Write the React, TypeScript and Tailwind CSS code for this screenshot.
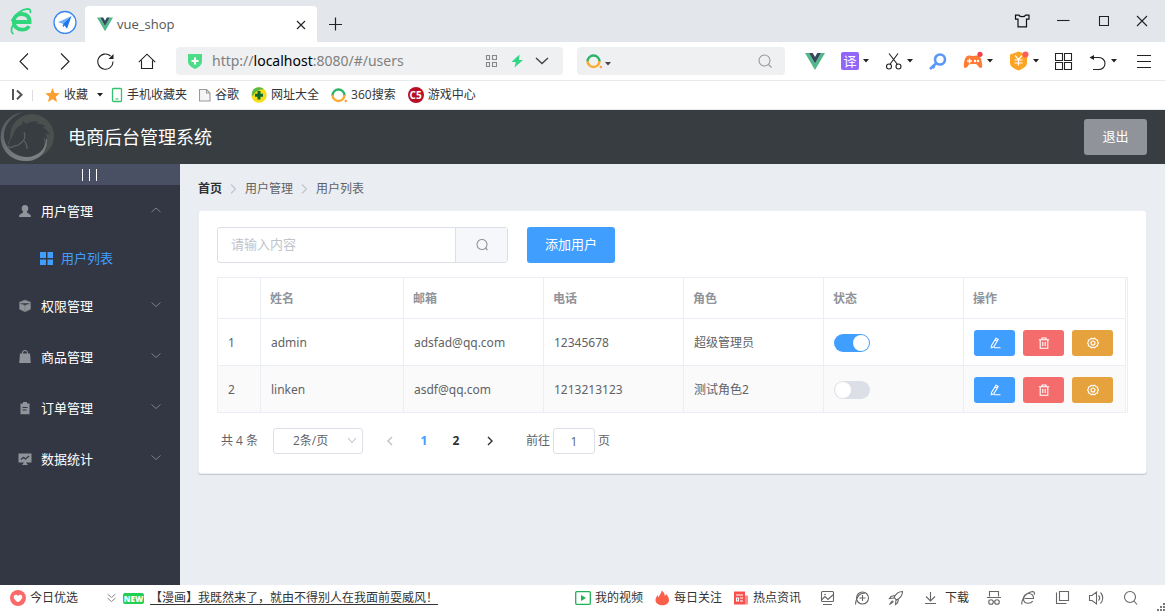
import { useState, type ReactNode } from "react";
import { clsx } from "clsx";

type User = {
  id: number;
  name: string;
  email: string;
  phone: string;
  role: string;
  active: boolean;
};

const USERS: User[] = [
  { id: 1, name: "admin", email: "adsfad@qq.com", phone: "12345678", role: "超级管理员", active: true },
  { id: 2, name: "linken", email: "asdf@qq.com", phone: "1213213123", role: "测试角色2", active: false },
];

const HEADINGS = ["姓名", "邮箱", "电话", "角色", "状态", "操作"];

function Svg({ w = 18, h = 18, className, children }: { w?: number; h?: number; className?: string; children: ReactNode }) {
  return (
    <svg
      width={w}
      height={h}
      viewBox={`0 0 ${w} ${h}`}
      fill="none"
      stroke="currentColor"
      strokeWidth="1.1"
      className={clsx("shrink-0", className)}
      aria-hidden="true"
    >
      {children}
    </svg>
  );
}

function Caret() {
  return (
    <Svg w={6} h={4}>
      <path d="M0 0h6L3 3.6z" fill="#222" stroke="none" />
    </Svg>
  );
}

function VueLogo({ size = 20 }: { size?: number }) {
  return (
    <svg width={size} height={size} viewBox="0 0 20 20" className="shrink-0" aria-hidden="true">
      <path d="M0 2h4l6 10.4L16 2h4L10 19z" fill="#4fb98a" />
      <path d="M4 2h3.7L10 6l2.3-4H16l-6 10.4z" fill="#35495e" />
    </svg>
  );
}

function SearchRing() {
  return (
    <Svg w={16} h={16}>
      <path d="M1.5 8.5a6 6 0 0 1 12 0" stroke="#2bb368" strokeWidth="2.4" />
      <path d="M1.5 8a6 6 0 0 0 12 0" stroke="#fbab2f" strokeWidth="2.4" />
      <circle cx="14.8" cy="14" r="1.2" fill="#fb9a3c" stroke="none" />
    </Svg>
  );
}

function TabStrip() {
  return (
    <div className="flex h-[42px] shrink-0 items-center bg-[#e3e6eb] text-[#222]">
      <Svg w={24} h={28} className="ml-[10px]">
        <path d="M4 15h15.6c.2-5-3-8-7.600-8-4.800 0-8.300 3.200-8.300 7.800s3.500 7.900 8.300 7.900c3.200 0 5.600-1.200 7-3.600" stroke="#2fd67c" strokeWidth="3.800" />
        <path d="M1.500 14C5 7 12 2 17.500 1.800c2.300 0 3.500 1.400 2.800 4.200M3 18C.8 22 .8 26 3.500 27" stroke="#2fd67c" strokeWidth="1.700" />
      </Svg>
      <button type="button" aria-label="导航" className="ml-[19px]">
        <Svg w={24} h={26}>
          <circle cx="12" cy="14.500" r="11" fill="#fff" stroke="#3a86f0" strokeWidth="1.300" />
          <path d="M18.500 8 5 14.300l5 1.400z" fill="#6bb0ff" stroke="none" />
          <path d="M18.500 8 10 15.700l4 5z" fill="#1d76ee" stroke="none" />
          <path d="m10 15.700-.3 3.800 1.900-2z" fill="#1d76ee" stroke="none" />
        </Svg>
      </button>
      <div className="ml-2 flex h-9 w-[232px] items-center self-end rounded-t-sm bg-white pl-3 pr-[10px]">
        <VueLogo size={16} />
        <span className="ml-1 flex-1 text-[13px] leading-5 text-[#555]">vue_shop</span>
        <button type="button" aria-label="关闭标签" className="pt-[2px]">
          <Svg w={12} h={12}>
            <path d="m2 2 8 8m0-8-8 8" />
          </Svg>
        </button>
      </div>
      <button type="button" aria-label="新标签" className="ml-3 pt-[6px]">
        <Svg w={14} h={14}>
          <path d="M6.500.5v13M0 7.500h13" strokeWidth="1.200" />
        </Svg>
      </button>
      <div className="ml-auto flex items-center gap-[27px] pr-[17px]">
        <button type="button" aria-label="皮肤">
          <Svg w={16} h={14}>
            <path d="M5 1.200H1.500v4H4v7.600h8.500V5.200H15v-4h-3.500c-.8 2-5.700 2-6.500 0z" stroke="#111" strokeWidth="1.200" />
          </Svg>
        </button>
        <button type="button" aria-label="最小化">
          <Svg w={13} h={14}>
            <path d="M0 6.500h12.500" />
          </Svg>
        </button>
        <button type="button" aria-label="最大化">
          <Svg w={12} h={14}>
            <path d="M2.500 2.500h9v9h-9z" />
          </Svg>
        </button>
        <button type="button" aria-label="关闭">
          <Svg w={12} h={14}>
            <path d="m1 2 10 10M11 2 1 12" />
          </Svg>
        </button>
      </div>
    </div>
  );
}

function Tool({ label, caret, children }: { label: string; caret?: boolean; children: ReactNode }) {
  return (
    <button type="button" aria-label={label} className="flex items-center gap-1">
      {children}
      {caret && <Caret />}
    </button>
  );
}

function NavButton({ label, children }: { label: string; children: ReactNode }) {
  return (
    <button type="button" aria-label={label} className="flex w-[41px] justify-center">
      {children}
    </button>
  );
}

function AddressBar() {
  return (
    <div className="flex h-[39px] shrink-0 items-center border-b border-[#e8eaec] bg-white pl-[3px] pr-3 text-[#222]">
      <NavButton label="后退">
        <Svg>
          <path d="M13 1.500 5 9.500l8 8" />
        </Svg>
      </NavButton>
      <NavButton label="前进">
        <Svg>
          <path d="m5 1.500 8 8-8 8" />
        </Svg>
      </NavButton>
      <NavButton label="刷新">
        <Svg>
          <path d="M16 9.500A7.600 7.600 0 1 1 13.500 4" />
          <path d="M16.500 2v5h-5z" fill="#222" stroke="none" />
        </Svg>
      </NavButton>
      <NavButton label="主页">
        <Svg>
          <path d="m.8 10.200 8.200-8 8.200 8M3.500 8.500v8h11v-8" />
        </Svg>
      </NavButton>
      <div className="ml-[9px] flex h-7 flex-1 items-center rounded bg-[#eff0f2] pl-3 pr-[14px]">
        <Svg w={14} h={16}>
          <path d="M0 1h14v7c0 4-3 6-7 8-4-2-7-4-7-8z" fill="#4cdb86" stroke="none" />
          <path d="M7 4.500v7M3.500 8h7" stroke="#fff" strokeWidth="2" />
        </Svg>
        <a href="http://localhost:8080/#/users" className="ml-[10px] flex-1 whitespace-nowrap font-['Noto_Sans','Noto_Sans_CJK_SC',sans-serif] text-[14px] leading-5 text-[#808080]">
          http://<span className="text-black">localhost</span>:8080/#/users
        </a>
        <Svg w={12} h={12} className="text-[#888]">
          <path d="M1.500.5h3v4h-3zM7.500.5h4v4h-4zM1.500 7.500h3v4h-3zM7.500 7.500h4v4h-4z" />
        </Svg>
        <Svg w={12} h={14} className="ml-[14px]">
          <path d="M8.500.5.5 8h4.300L3.500 13.500 12 6H8z" fill="#32d583" stroke="none" />
        </Svg>
        <Svg w={14} h={8} className="ml-3 text-[#444]">
          <path d="m1 1 6 5.500L13 1" strokeWidth="1.400" />
        </Svg>
      </div>
      <div className="ml-[14px] mr-5 flex h-7 w-[208px] items-center rounded bg-[#eff0f2] px-[9px] pr-[13px]">
        <SearchRing />
        <Svg w={6} h={10} className="ml-[3px]">
          <path d="M0 6h6L3 9.500z" fill="#444" stroke="none" />
        </Svg>
        <input aria-label="搜索" className="min-w-0 flex-1 bg-transparent text-[13px] outline-none" />
        <Svg w={14} h={14} className="text-[#999]">
          <circle cx="6.500" cy="6.500" r="5.500" />
          <path d="m10.500 10.500 3 3" />
        </Svg>
      </div>
      <div className="flex items-center gap-4">
        <Tool label="Vue">
          <VueLogo />
        </Tool>
        <Tool label="翻译" caret>
          <span className="flex size-[18px] items-center justify-center rounded-xs bg-[#9266f9] text-[13px] leading-none text-white">译</span>
        </Tool>
        <Tool label="截图" caret>
          <Svg>
            <path d="M4 1.500 12.500 12.500M13 1.500 4.800 12.500" />
            <circle cx="4" cy="14.500" r="2.500" />
            <circle cx="13.500" cy="14.500" r="2.500" />
          </Svg>
        </Tool>
        <Tool label="密码">
          <Svg>
            <circle cx="11" cy="7.500" r="5" stroke="#5a97f8" strokeWidth="2.600" />
            <path d="m7.500 11-6.500 6M4 14.500l1.500 1.500" stroke="#5a97f8" strokeWidth="2.600" />
          </Svg>
        </Tool>
        <Tool label="游戏" caret>
          <Svg w={20} h={20}>
            <path d="M6 4.500c2 .6 6 .6 8 0 4 0 5 6 5.200 10.500.1 2.800-2.700 2.300-4 .2-1.200-2-2-2.200-5.200-2.200s-4 .2-5.200 2.200c-1.300 2.100-4.100 2.600-4-.2C1 10.500 2 4.500 6 4.500z" fill="#ff7b35" stroke="none" />
            <path d="M6.500 7.500v5M4 10h5" stroke="#fff" strokeWidth="1.300" />
            <circle cx="12" cy="10" r="1.200" fill="#fff" stroke="none" />
            <circle cx="15" cy="10" r="1.200" fill="#fff" stroke="none" />
            <circle cx="17" cy="3.300" r="2.600" fill="#f4404c" stroke="none" />
          </Svg>
        </Tool>
        <Tool label="钱包" caret>
          <Svg w={20} h={20}>
            <path d="M9.500.5 18 3.500V12c0 3.800-5 6-8.500 7.500C6 18 1 15.800 1 12V3.500z" fill="#fca524" stroke="none" />
            <path d="m6 4.500 3.500 4 3.500-4M9.500 8.500v6M5.500 9h8M5.500 12h8" stroke="#fff" strokeWidth="1.200" />
            <circle cx="16.500" cy="3.500" r="3" fill="#ff5b5b" stroke="none" />
          </Svg>
        </Tool>
        <Tool label="应用">
          <Svg>
            <path d="M.5 1.500h7v7h-7zM9.500 1.500h7v7h-7zM.5 10.500h7v7h-7zM9.500 10.500h7v7h-7z" />
          </Svg>
        </Tool>
        <Tool label="恢复" caret>
          <Svg>
            <path d="M3 5.500h7a6 6 0 0 1 0 12H4" />
            <path d="M.5 5.500 5 3v5z" fill="#222" stroke="none" />
          </Svg>
        </Tool>
        <Tool label="菜单">
          <Svg w={20} h={18}>
            <path d="M4 3.500h14M4 9.500h14M4 15.500h14" />
          </Svg>
        </Tool>
      </div>
    </div>
  );
}

function Bookmark({ icon, children }: { icon: ReactNode; children: ReactNode }) {
  return (
    <a href="#" className="flex items-center gap-1 whitespace-nowrap">
      {icon}
      {children}
    </a>
  );
}

function BookmarkBar() {
  return (
    <div className="flex h-[29px] shrink-0 items-center border-b border-[#e8eaec] bg-white pl-3 text-[12px] leading-4 text-[#333]">
      <button type="button" aria-label="展开">
        <Svg w={11} h={12}>
          <path d="M1 0v11" stroke="#555" strokeWidth="2" />
          <path d="m5 1.500 4.500 4.300L5 10.200" stroke="#555" strokeWidth="2" />
        </Svg>
      </button>
      <span className="ml-[9px] mr-3 h-[11px] w-px bg-[#ddd]" />
      <button type="button" className="mr-2 flex items-center gap-[3px]">
        <Svg w={16} h={16}>
          <path d="m7.500 1 2 4.900 5.300.4-4 3.500 1.200 5.200-4.500-2.800L3 15l1.200-5.200-4-3.500 5.300-.4z" fill="#fba02f" stroke="none" />
        </Svg>
        收藏
        <span className="ml-[6px]">
          <Caret />
        </span>
      </button>
      <div className="flex items-center gap-3">
        <Bookmark
          icon={
            <Svg w={12} h={16}>
              <rect x="1.500" y="1.500" width="9" height="13" rx="1" stroke="#34c26e" strokeWidth="1.300" />
              <path d="M4.500 12h3" stroke="#34c26e" />
            </Svg>
          }
        >
          手机收藏夹
        </Bookmark>
        <Bookmark
          icon={
            <Svg w={12} h={14}>
              <path d="M.5 1.500h7l3.500 3.500v8H.5z" stroke="#999" fill="#f5f5f5" />
              <path d="M7.500 1.500V5H11" stroke="#999" />
            </Svg>
          }
        >
          谷歌
        </Bookmark>
        <Bookmark
          icon={
            <Svg w={16} h={16}>
              <circle cx="8" cy="8" r="7.700" fill="#f8dc1c" stroke="none" />
              <path d="M2.500 2.500A7.700 7.700 0 0 1 13 2.200C8 2 4 4 1.800 9.500.5 7 1 4.500 2.500 2.500z" fill="#58b947" stroke="none" />
              <path d="M8 4v8.500M4 8.200h8" stroke="#0c6b2c" strokeWidth="3" />
            </Svg>
          }
        >
          网址大全
        </Bookmark>
        <Bookmark icon={<SearchRing />}>360搜索</Bookmark>
        <Bookmark
          icon={
            <span className="flex size-4 items-center justify-center rounded-full bg-[#b80f27] text-[10px] font-bold leading-none text-white">
              C5
            </span>
          }
        >
          游戏中心
        </Bookmark>
      </div>
    </div>
  );
}

function HorseLogo() {
  return (
    <svg width="56" height="54" viewBox="0 0 56 54" className="shrink-0" aria-hidden="true">
      <defs>
        <linearGradient id="ring" x1="0" y1="0" x2="0.300" y2="1">
          <stop offset="0" stopColor="#4c5255" />
          <stop offset="1" stopColor="#7b7f82" />
        </linearGradient>
      </defs>
      <circle cx="32" cy="26" r="22" fill="#48514e" />
      <path
        d="M8 35c1-4 3-7 5-11 1-4 4-8 9-10l1-3 3 3c4-2 8-3 12-2l-3 2c4-1 8 0 11 3l-4 0c4 2 6 4 8 8l-5-2c1 2 2 4 2 7l-4-3c3 8 1 14-4 18-6 5-17 5-24 0-3-2-4-5-5-7z"
        fill="#373d41"
      />
      <path d="M23 2C6 5-1 18 1 31c2 13 14 21 27 20 12-1 20-10 19-23l-1 2c-1 10-8 16-18 17C16 47 6 40 4 28 3 17 10 7 23 2z" fill="url(#ring)" />
      <path d="M8 36c1 2 4 2 6 0 3 0 5-1 7-3 3-2 5-6 3-11m-1 8c3 2 4 5 4 9" fill="none" stroke="#596062" strokeWidth="1.300" />
      <path d="M8 35c1-4 3-7 5-11 1-4 4-8 9-10" fill="none" stroke="#4c5456" />
    </svg>
  );
}

function Header() {
  return (
    <header className="flex h-[54px] shrink-0 items-center bg-[#373d41] pr-[18px]">
      <HorseLogo />
      <h1 className="ml-3 flex-1 text-[18px] leading-6 text-white">电商后台管理系统</h1>
      <button type="button" className="h-9 w-[63px] rounded-[3px] bg-[#909399] pb-[2px] text-[13px] leading-5 text-white">
        退出
      </button>
    </header>
  );
}

const MENU: { label: string; icon: ReactNode }[] = [
  {
    label: "权限管理",
    icon: <path d="M7 1 12.500 3.200v7L7 12.800 1.500 10.200v-7zM1.500 4.200 7 6.500l5.500-2.300M7 6.500v6.300" fill="currentColor" stroke="#747780" strokeWidth=".8" />,
  },
  {
    label: "商品管理",
    icon: (
      <>
        <path d="M2 3.500h10l.8 9.500H1.200z" fill="currentColor" stroke="none" />
        <path d="M4.500 5V3a2.500 2.500 0 0 1 5 0v2" />
      </>
    ),
  },
  {
    label: "订单管理",
    icon: (
      <>
        <path d="M2.500 2.500H5V1h4v1.500h2.500v10.700h-9z" fill="currentColor" stroke="none" />
        <path d="M4.500 6.500h5M4.500 9h4" stroke="#333744" />
      </>
    ),
  },
  {
    label: "数据统计",
    icon: (
      <>
        <path d="M.5 1.500h13v9H8l2 2.500H4l2-2.500H.5z" fill="currentColor" stroke="none" />
        <path d="m3 7.500 2.500-2.300L7.500 7 11 4" stroke="#333744" strokeWidth="1.200" />
      </>
    ),
  },
];

function MenuItem({ label, icon, open }: { label: string; icon: ReactNode; open?: boolean }) {
  return (
    <button type="button" aria-expanded={!!open} className="flex h-[51px] w-full items-center pl-[18px] pr-[19px] text-white">
      <Svg w={14} h={14} className="text-[#909399]">
        {icon}
      </Svg>
      <span className="ml-[9px] flex-1 text-left text-[13px] leading-5">{label}</span>
      <Svg w={10} h={10} className="text-[#7c7f88]">
        <path d={open ? "m.5 6 4.500-4L9.500 6" : "m.5 1.500 4.500 4 4.500-4"} strokeWidth="1" />
      </Svg>
    </button>
  );
}

function Sidebar() {
  return (
    <aside className="w-[180px] shrink-0 bg-[#333744]">
      <button type="button" aria-label="折叠菜单" className="flex h-[21px] w-full items-center justify-center gap-[6px] bg-[#4a5064] pr-[2px]">
        <span className="h-3 w-px bg-white" />
        <span className="h-3 w-px bg-white" />
        <span className="h-3 w-px bg-white" />
      </button>
      <nav>
        <MenuItem
          label="用户管理"
          open
          icon={<path d="M7 1c2.200 0 3.300 1.400 3.300 3.300 0 1.600-.7 2.600-1.500 3.500 0 1.700 4.200 1.600 4.200 5.200H1c0-3.600 4.200-3.500 4.200-5.200-.8-.9-1.500-1.900-1.500-3.500C3.700 2.400 4.800 1 7 1z" fill="currentColor" stroke="none" />}
        />
        <a href="#/users" className="flex h-11 items-center pl-10 text-[13px] leading-5 text-[#409eff]">
          <Svg w={13} h={13} className="mr-2">
            <path d="M0 0h6v6H0zM7.500 0h5.500v6H7.500zM0 7.500h6V13H0zM7.500 7.500H13V13H7.500z" fill="currentColor" stroke="none" />
          </Svg>
          用户列表
        </a>
        {MENU.map((m) => (
          <MenuItem key={m.label} label={m.label} icon={m.icon} />
        ))}
      </nav>
    </aside>
  );
}

function Separator() {
  return (
    <Svg w={7} h={12} className="mx-2 text-[#c0c4cc]">
      <path d="m1 1.500 4.500 4.500L1 10.500" />
    </Svg>
  );
}

function ActionButton({ label, className, children }: { label: string; className: string; children: ReactNode }) {
  return (
    <button type="button" aria-label={label} className={clsx("flex h-[26px] w-[41px] items-center justify-center rounded-[3px] text-white", className)}>
      <Svg w={12} h={12}>{children}</Svg>
    </button>
  );
}

function UserTable() {
  const [users, setUsers] = useState(USERS);

  const toggle = (id: number) => setUsers((list) => list.map((u) => (u.id === id ? { ...u, active: !u.active } : u)));

  return (
    <div className="mt-[14px] border border-b-0 border-[#ebeef5] pr-px">
      <table className="w-full table-fixed border-separate border-spacing-0 text-left font-['Noto_Sans','Noto_Sans_CJK_SC',sans-serif] text-[12px] leading-5 text-[#606266]">
        <colgroup>
          <col className="w-[43px]" />
          <col className="w-[143px]" />
          <col />
          <col />
          <col />
          <col />
          <col className="w-[162px]" />
        </colgroup>
        <thead>
          <tr className="h-[41px] text-[#909399]">
            <td className="border-b border-r border-[#ebeef5]" />
            {HEADINGS.map((h) => (
              <th key={h} scope="col" className="border-b border-r border-[#ebeef5] px-[9px] pt-[2px] font-bold">
                {h}
              </th>
            ))}
          </tr>
        </thead>
        <tbody>
          {users.map((u) => (
            <tr key={u.id} className="h-[47px] even:bg-[#fafafa] [&>td]:border-b [&>td]:border-r [&>td]:border-[#ebeef5] [&>td]:pl-[10px] [&>td]:pr-[9px] [&>td]:pt-px">
              <td>{u.id}</td>
              <td>{u.name}</td>
              <td>{u.email}</td>
              <td>{u.phone}</td>
              <td>{u.role}</td>
              <td>
                <input
                  type="checkbox"
                  role="switch"
                  aria-label={`${u.name} 状态`}
                  checked={u.active}
                  onChange={() => toggle(u.id)}
                  className="block h-[18px] w-9 appearance-none rounded-full bg-[#dcdfe6] p-px before:block before:size-4 before:rounded-full before:bg-white checked:bg-[#409eff] checked:pl-[19px]"
                />
              </td>
              <td>
                <div className="flex gap-2">
                  <ActionButton label="编辑" className="bg-[#409eff]">
                    <path d="M2.500 8.500 7 1.200l2.200 1.300L4.800 9.800l-2.500.8zM6 3l2.200 1.300M5 10.800h6.500" />
                  </ActionButton>
                  <ActionButton label="删除" className="bg-[#f56c6c]">
                    <path d="M.8 2.800h10.400M4 2.500V1h4v1.500M2.200 3v8.200h7.600V3M4.800 5v4M7.200 5v4" />
                  </ActionButton>
                  <ActionButton label="分配角色" className="bg-[#e6a23c]">
                    <path d="M4.300 1.200 6 1.800l1.700-.6 1.200 1.400 1.700.5v1.800L11.500 6l-.9 1.200v1.700l-1.700.5-1.200 1.400L6 10.200l-1.700.6-1.200-1.400-1.700-.5V7.200L.5 6l.9-1.100V3.100l1.700-.5z" />
                    <circle cx="6" cy="6" r="2" />
                  </ActionButton>
                </div>
              </td>
            </tr>
          ))}
        </tbody>
      </table>
    </div>
  );
}

function Pagination() {
  return (
    <div className="mt-[15px] flex h-[26px] items-center pl-1 text-[12px] leading-5 text-[#606266]">
      <span className="w-[52px] whitespace-nowrap">共 4 条</span>
      <div className="relative">
        <select aria-label="每页条数" className="block h-[26px] w-[90px] appearance-none rounded-[3px] border border-[#dcdfe6] bg-white pl-[19px]">
          <option>2条/页</option>
          <option>5条/页</option>
          <option>10条/页</option>
        </select>
        <Svg w={10} h={8} className="pointer-events-none absolute right-[6px] top-[9px] text-[#c0c4cc]">
          <path d="m1 1 4 4.500L9 1" />
        </Svg>
      </div>
      <div className="ml-[11px] flex items-center font-bold text-[#303133]">
        <button type="button" aria-label="上一页" disabled className="flex w-8 justify-center text-[#c0c4cc]">
          <Svg w={8} h={10}>
            <path d="M6 1 2 5l4 4" strokeWidth="1.500" />
          </Svg>
        </button>
        <button type="button" aria-current="page" className="w-9 text-[#409eff]">
          1
        </button>
        <button type="button" className="w-7">
          2
        </button>
        <button type="button" aria-label="下一页" className="flex w-10 justify-center">
          <Svg w={8} h={10}>
            <path d="m2 1 4 4-4 4" strokeWidth="1.400" />
          </Svg>
        </button>
      </div>
      <label className="ml-4 flex items-center gap-[3px]">
        前往
        <input type="text" defaultValue="1" className="h-[26px] w-[42px] rounded-[3px] border border-[#dcdfe6] text-center" />
        页
      </label>
    </div>
  );
}

function UserList() {
  return (
    <main className="min-w-0 flex-1 bg-[#eaedf1] px-[18px] pt-[15px]">
      <nav aria-label="面包屑" className="flex h-5 items-center text-[12px] leading-5 text-[#606266]">
        <a href="#/home" className="font-bold text-[#303133]">
          首页
        </a>
        <Separator />
        <span>用户管理</span>
        <Separator />
        <span>用户列表</span>
      </nav>
      <section className="mt-[11px] rounded-[3px] border border-[#ebeef5] bg-white px-[18px] pb-[19px] pt-4 shadow-[0_1px_1px_rgba(0,0,0,0.15)]">
        <div className="flex">
          <div className="flex h-9 w-[291px] rounded-[3px] border border-[#dcdfe6] text-[13px] leading-5">
            <input aria-label="搜索用户" placeholder="请输入内容" className="min-w-0 flex-1 px-[13px] pb-[2px] outline-none placeholder:text-[#c0c4cc]" />
            <button type="button" aria-label="查询" className="flex w-[52px] items-center justify-center border-l border-[#dcdfe6] bg-[#f5f7fa] text-[#909399]">
              <Svg w={12} h={12}>
                <circle cx="6" cy="5.500" r="5" />
                <path d="m9.500 9 2 2" />
              </Svg>
            </button>
          </div>
          <button type="button" className="ml-[19px] h-9 w-[88px] rounded-[3px] bg-[#409eff] pb-[2px] text-[13px] leading-5 text-white">
            添加用户
          </button>
        </div>
        <UserTable />
        <Pagination />
      </section>
    </main>
  );
}

function StatusIcon({ label, children }: { label: string; children: ReactNode }) {
  return (
    <button type="button" aria-label={label}>
      <Svg className="text-[#666]">{children}</Svg>
    </button>
  );
}

function StatusBar() {
  return (
    <footer className="relative flex h-[26px] shrink-0 items-center bg-white pl-[10px] pr-[26px] text-[12px] leading-4 text-[#333]">
      <a href="#" className="flex items-center gap-1 whitespace-nowrap">
        <Svg w={16} h={16}>
          <circle cx="8" cy="8" r="8" fill="#fb6a68" stroke="none" />
          <path d="M8 12.300C5 10.300 3.700 8.800 3.700 7c0-2.300 3-3 4.300-1 1.300-2 4.300-1.300 4.300 1 0 1.800-1.300 3.300-4.300 5.300z" fill="#fff" stroke="none" />
        </Svg>
        今日优选
      </a>
      <Svg w={9} h={10} className="ml-[29px] text-[#888]">
        <path d="M.5 1 4.500 4.500 8.500 1M.5 5 4.500 8.500 8.500 5" strokeWidth="1" />
      </Svg>
      <span className="ml-[7px] h-[11px] w-[21px] rounded-xs bg-[#22cf55] text-center text-[8px] font-extrabold leading-[11px] text-white">NEW</span>
      <a href="#" className="ml-[6px] whitespace-nowrap underline underline-offset-2">
        【漫画】我既然来了，就由不得别人在我面前耍威风！
      </a>
      <div className="ml-auto flex items-center gap-3 whitespace-nowrap">
        <a href="#" className="flex items-center gap-1">
          <Svg w={16} h={16}>
            <rect x=".7" y="1.700" width="14.600" height="12.600" rx="1" stroke="#1fb356" strokeWidth="1.300" />
            <path d="m6 5 5 3-5 3z" fill="#1fb356" stroke="none" />
          </Svg>
          我的视频
        </a>
        <a href="#" className="flex items-center gap-1">
          <Svg w={15} h={16}>
            <path d="M6.500.5c2.500 1.500 3.300 3.300 3.300 5.500.8-.5 1.200-1.200 1.200-2 2 2 3.200 4 3 6.500-.3 3-3 4.800-6.500 4.800S.7 13.500.5 10.500C.4 8.500 1.500 7 2.500 5c.3 1.200.7 2 1.500 2C4 5 6.500 4 6.500.5z" fill="#fb5f4c" stroke="none" />
          </Svg>
          每日关注
        </a>
        <a href="#" className="flex items-center gap-1">
          <Svg w={15} h={16}>
            <path d="M0 1.500h11v13H0z" fill="#f8504d" stroke="none" />
            <path d="M11 5.500h3v9h-3z" fill="#fb8d88" stroke="none" />
            <path d="M2 5h7M2.500 8h2v3h-2zM6 8h3M6 11h3" stroke="#fff" />
          </Svg>
          热点资讯
        </a>
      </div>
      <div className="ml-[18px] flex items-center gap-4">
        <StatusIcon label="图片">
          <rect x="2.500" y="2.500" width="12" height="10" rx="1" />
          <path d="m3 10.500 3-3 3 3 2-2 3.500-3M4 15.500h9" />
          <circle cx="6" cy="5.500" r=".8" fill="currentColor" stroke="none" />
        </StatusIcon>
        <StatusIcon label="加速">
          <circle cx="9.500" cy="9" r="6" />
          <path d="M2.500 15.500C3 9 6 4 12 4M9.500 6v6M6.500 9h6" />
        </StatusIcon>
        <StatusIcon label="火箭">
          <path d="M15.500 2.500c-4 0-7 3-8.500 6l2.500 2.500c3-1.500 6-4.500 6-8.500zM7.500 6.500 4 7.500l-1.500 2L7 9M11.500 10.500l-1 3.500-2 1.500L9 11M5.500 11.500l-3 4 4-3" />
        </StatusIcon>
        <button type="button" className="flex items-center gap-[6px] whitespace-nowrap">
          <Svg className="text-[#666]">
            <path d="M9.500 3v9M5 7.500l4.500 4.500L14 7.500M4 14.500h11" />
          </Svg>
          下载
        </button>
        <StatusIcon label="无痕">
          <path d="M4.500 7.500v-5h9v5M2 8.500h14" />
          <circle cx="6" cy="13" r="2.300" />
          <circle cx="12" cy="13" r="2.300" />
          <path d="M8.500 12.500h1" />
        </StatusIcon>
        <StatusIcon label="内核">
          <path d="M5.500 9.500h9c.3-3-1.700-5-4.700-5-3.300 0-5.300 2.500-5.300 5.300 0 2.700 2 4.500 4.700 4.500 2 0 3.600-.8 4.600-2.300" />
          <path d="M3 15.500C2 12 6 4 12.500 2.700c2.500-.5 3.500.8 2.700 3" />
        </StatusIcon>
        <StatusIcon label="分屏">
          <path d="M6.500 2.500h9v9h-9zM3.500 3.500v11h10" />
        </StatusIcon>
        <StatusIcon label="声音">
          <path d="M2.500 6.500h2.500L9.500 3v12L5 11.500H2.500zM11.500 6.500c1.500 1.500 1.500 3.500 0 5M13.500 3.500c3 3 3 8 0 11" />
        </StatusIcon>
        <StatusIcon label="查找">
          <circle cx="9" cy="8" r="5.500" />
          <path d="m13 12 3 3.500" />
        </StatusIcon>
      </div>
      <Svg w={8} h={8} className="absolute bottom-0 right-0">
        <path d="M6 0h2v2H6zM3 3h2v2H3zM6 3h2v2H6zM0 6h2v2H0zM3 6h2v2H3zM6 6h2v2H6z" fill="#777" stroke="none" />
      </Svg>
    </footer>
  );
}

export default function App() {
  return (
    <div className="flex h-screen flex-col overflow-hidden font-['Open_Sans','Noto_Sans_CJK_SC',sans-serif]">
      <TabStrip />
      <AddressBar />
      <BookmarkBar />
      <Header />
      <div className="flex min-h-0 flex-1">
        <Sidebar />
        <UserList />
      </div>
      <StatusBar />
    </div>
  );
}
